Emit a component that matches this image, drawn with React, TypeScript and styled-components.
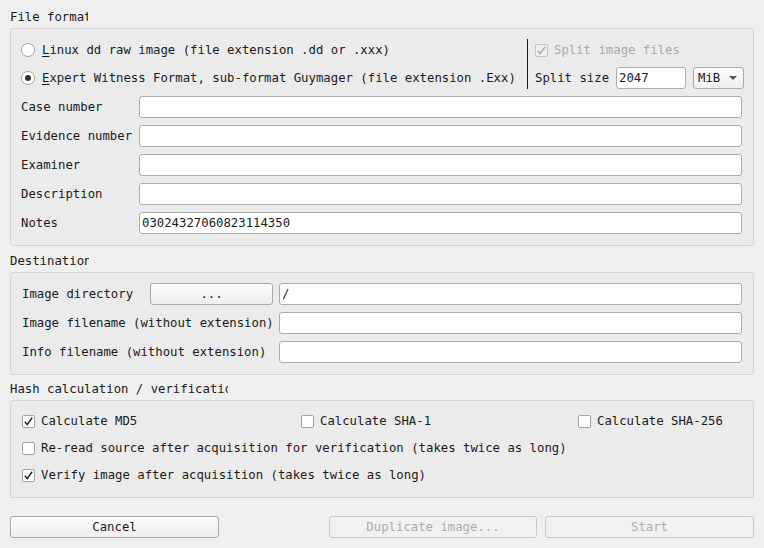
import React from "react";
import styled, { createGlobalStyle } from "styled-components";

const Global = createGlobalStyle`
  html, body { margin: 0; padding: 0; background: #efefef; }
  body {
    font-family: "DejaVu Sans Mono", "Liberation Mono", monospace;
    font-size: 12.3px;
    color: #1a1a1a;
  }
  * { box-sizing: border-box; }
`;

const Page = styled.div`
  width: 764px;
  height: 548px;
  padding: 9px 10px 0 10px;
  display: flex;
  flex-direction: column;
`;

const Title = styled.div<{ $w: number; $mt?: number }>`
  width: ${(p) => p.$w}px;
  height: 19px;
  line-height: 17px;
  overflow: hidden;
  white-space: nowrap;
  margin-top: ${(p) => p.$mt ?? 0}px;
`;

const Group = styled.div<{ $pt: number; $pl: number; $pb?: number }>`
  background: #ebebeb;
  border: 1px solid #d5d5d5;
  border-radius: 3px;
  padding: ${(p) => p.$pt}px 11px ${(p) => p.$pb ?? 11}px ${(p) => p.$pl}px;
  display: flex;
  flex-direction: column;
  gap: 7px;
`;

const TopSection = styled.div`
  display: flex;
  align-items: stretch;
  height: 50px;
`;

const RadioCol = styled.div`
  flex: 1;
  display: flex;
  flex-direction: column;
  justify-content: space-between;
`;

const OptionRow = styled.label<{ $disabled?: boolean }>`
  display: flex;
  align-items: center;
  height: 22px;
  gap: 7px;
  white-space: nowrap;
  color: ${(p) => (p.$disabled ? "#a9a9a9" : "#1a1a1a")};
`;

const RadioCircle = styled.span<{ $on?: boolean }>`
  width: 14px;
  height: 14px;
  border-radius: 50%;
  background: #ffffff;
  border: 1px solid #a3a3a3;
  display: flex;
  align-items: center;
  justify-content: center;
  &::after {
    content: "";
    display: ${(p) => (p.$on ? "block" : "none")};
    width: 6px;
    height: 6px;
    border-radius: 50%;
    background: #333;
  }
`;

const Mnemonic = styled.span`
  text-decoration: underline;
  text-underline-offset: 2px;
`;

const VSep = styled.div`
  width: 1px;
  background: #1a1a1a;
  margin: 0 7px 0 1px;
`;

const RightCol = styled.div`
  width: 207px;
  display: flex;
  flex-direction: column;
  justify-content: space-between;
`;

const SplitRow = styled.div`
  display: flex;
  align-items: center;
  height: 22px;
  gap: 7px;
  white-space: nowrap;
`;

const Box = styled.span<{ $disabled?: boolean }>`
  width: 13px;
  height: 13px;
  flex: none;
  background: ${(p) => (p.$disabled ? "#efefef" : "#ffffff")};
  border: 1px solid ${(p) => (p.$disabled ? "#c4c4c4" : "#a3a3a3")};
  border-radius: 2px;
  display: flex;
  align-items: center;
  justify-content: center;
`;

const Input = styled.div<{ $w?: number }>`
  height: 22px;
  ${(p) => (p.$w ? `width: ${p.$w}px; flex: none;` : "flex: 1; min-width: 0;")}
  background: #fff;
  border: 1px solid #ababab;
  border-radius: 3px;
  padding: 0 2px;
  line-height: 20px;
  white-space: nowrap;
  overflow: hidden;
`;

const Combo = styled.div`
  width: 51px;
  height: 22px;
  flex: none;
  background: linear-gradient(#fbfbfb, #f0f0f0);
  border: 1px solid #ababab;
  border-radius: 3px;
  padding: 0 0 0 4px;
  display: flex;
  align-items: center;
  justify-content: space-between;
`;

const Arrow = styled.span`
  width: 0;
  height: 0;
  border-left: 4px solid transparent;
  border-right: 4px solid transparent;
  border-top: 4px solid #555;
  margin-right: 6px;
`;

const FieldGrid = styled.div<{ $col: string }>`
  display: grid;
  grid-template-columns: ${(p) => p.$col} 1fr;
  column-gap: 6px;
  row-gap: 7px;
  align-items: center;
`;

const Label = styled.span`
  white-space: nowrap;
  line-height: 22px;
`;

const DirCell = styled.div`
  display: flex;
  align-items: center;
  justify-content: space-between;
`;

const Button = styled.button<{ $w: number; $disabled?: boolean }>`
  width: ${(p) => p.$w}px;
  height: 22px;
  flex: none;
  font: inherit;
  color: ${(p) => (p.$disabled ? "#ababab" : "#1a1a1a")};
  background: ${(p) => (p.$disabled ? "#f1f1f1" : "linear-gradient(#fbfbfb, #efefef)")};
  border: 1px solid ${(p) => (p.$disabled ? "#c6c6c6" : "#a9a9a9")};
  border-radius: 3px;
  padding: 0;
  line-height: 20px;
`;

const HashRow = styled.div`
  display: grid;
  grid-template-columns: 279px 277px 1fr;
  height: 20px;
  align-items: center;
`;

const CheckRow = styled.label`
  display: flex;
  align-items: center;
  height: 20px;
  gap: 6px;
  white-space: nowrap;
`;

const BottomBar = styled.div`
  display: flex;
  align-items: center;
  margin-top: 18px;
  gap: 8px;
`;

const Spacer = styled.div`
  flex: 1;
`;

const Check = ({ color }: { color: string }) => (
  <svg width="11" height="11" viewBox="0 0 11 11">
    <path d="M1.8 5.6 L4.2 8.6 L9.2 1.6" fill="none" stroke={color} strokeWidth="1.5" />
  </svg>
);

const CheckBox = ({ checked, disabled }: { checked?: boolean; disabled?: boolean }) => (
  <Box $disabled={disabled}>{checked && <Check color={disabled ? "#a8a8a8" : "#1a1a1a"} />}</Box>
);

export default function App() {
  return (
    <>
      <Global />
      <Page>
        <Title $w={78}>File format</Title>
        <Group $pt={10} $pl={10}>
          <TopSection>
            <RadioCol>
              <OptionRow>
                <RadioCircle />
                <span>
                  <Mnemonic>L</Mnemonic>inux dd raw image (file extension .dd or .xxx)
                </span>
              </OptionRow>
              <OptionRow>
                <RadioCircle $on />
                <span>
                  <Mnemonic>E</Mnemonic>xpert Witness Format, sub-format Guymager (file extension .Exx)
                </span>
              </OptionRow>
            </RadioCol>
            <VSep />
            <RightCol>
              <OptionRow $disabled style={{ gap: 6 }}>
                <CheckBox checked disabled />
                <span>Split image files</span>
              </OptionRow>
              <SplitRow>
                <span>Split size</span>
                <Input $w={70}>2047</Input>
                <Combo>
                  <span>MiB</span>
                  <Arrow />
                </Combo>
              </SplitRow>
            </RightCol>
          </TopSection>
          <FieldGrid $col="112px">
            <Label>Case number</Label>
            <Input />
            <Label>Evidence number</Label>
            <Input />
            <Label>Examiner</Label>
            <Input />
            <Label>Description</Label>
            <Input />
            <Label>Notes</Label>
            <Input>03024327060823114350</Input>
          </FieldGrid>
        </Group>

        <Title $w={79} $mt={7}>Destination</Title>
        <Group $pt={10} $pl={11}>
          <FieldGrid $col="251px">
            <DirCell>
              <Label>Image directory</Label>
              <Button $w={123}>...</Button>
            </DirCell>
            <Input>/</Input>
            <Label>Image filename (without extension)</Label>
            <Input />
            <Label>Info filename (without extension)</Label>
            <Input />
          </FieldGrid>
        </Group>

        <Title $w={218} $mt={6}>Hash calculation / verification</Title>
        <Group $pt={10} $pl={11} $pb={12}>
          <HashRow>
            <CheckRow>
              <CheckBox checked />
              <span>Calculate MD5</span>
            </CheckRow>
            <CheckRow>
              <CheckBox />
              <span>Calculate SHA-1</span>
            </CheckRow>
            <CheckRow>
              <CheckBox />
              <span>Calculate SHA-256</span>
            </CheckRow>
          </HashRow>
          <CheckRow>
            <CheckBox />
            <span>Re-read source after acquisition for verification (takes twice as long)</span>
          </CheckRow>
          <CheckRow>
            <CheckBox checked />
            <span>Verify image after acquisition (takes twice as long)</span>
          </CheckRow>
        </Group>

        <BottomBar>
          <Button $w={209}>Cancel</Button>
          <Spacer />
          <Button $w={208} $disabled>
            Duplicate image...
          </Button>
          <Button $w={209} $disabled>
            Start
          </Button>
        </BottomBar>
      </Page>
    </>
  );
}
